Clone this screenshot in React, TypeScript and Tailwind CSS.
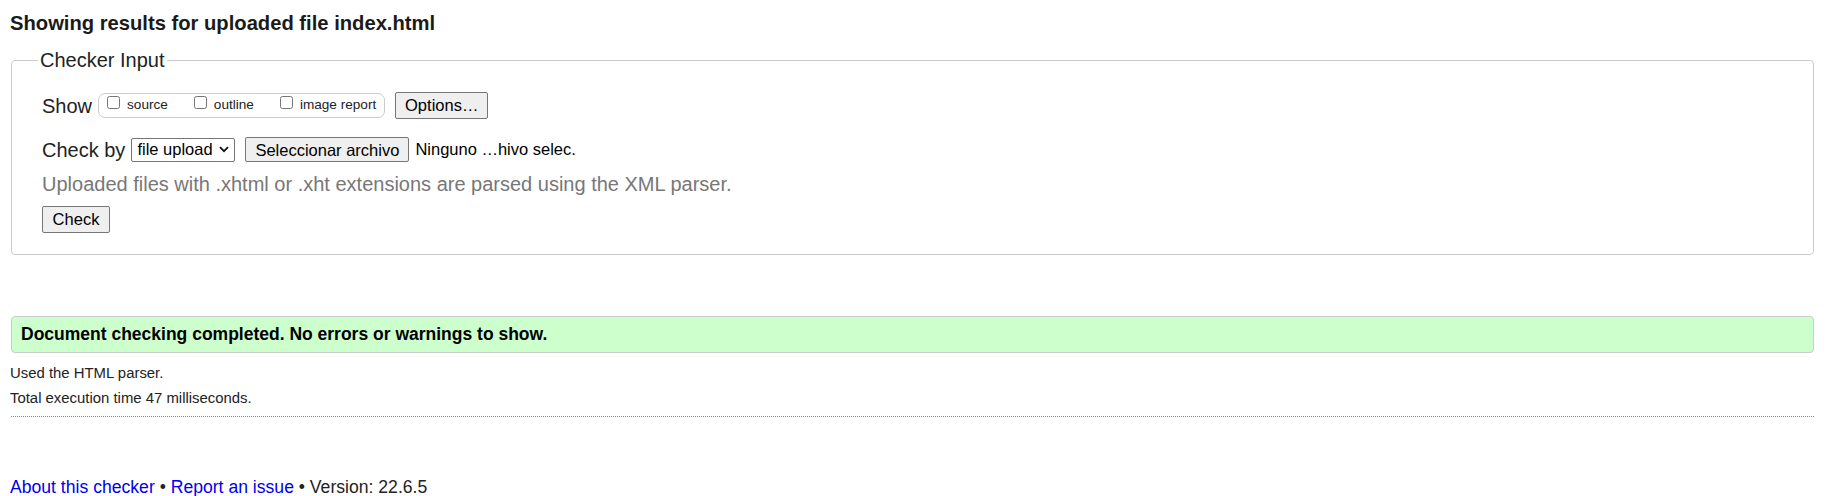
import React from "react";

function Chevron() {
  return (
    <svg width="10" height="7" viewBox="0 0 10 7" className="ml-[6px]">
      <path d="M1 1.2 L5 5.2 L9 1.2" fill="none" stroke="#111" strokeWidth="1.8" />
    </svg>
  );
}

function Box({ label }: { label: string }) {
  return (
    <label className="flex items-center">
      <input type="checkbox" className="w-[13px] h-[13px] -mt-[6px]" />
      <span className="ml-[7px] text-[13.6px]">{label}</span>
    </label>
  );
}

export default function App() {
  return (
    <div className="min-h-[496px] bg-white text-[#222] font-['Liberation_Sans',Arial,sans-serif] pl-[11px] pr-[24px]">
      {/* result heading */}
      <h2 className="pt-[11px] -ml-px text-[20.2px] leading-[24px] font-bold text-[#1a1a1a]">
        Showing results for uploaded file index.html
      </h2>

      <fieldset className="mt-[13px] border border-[#cccccc] rounded-[4px] pl-[30px] pr-[30px] pt-[20px] pb-[21px]">
        <legend className="-ml-[4px] px-[2px] text-[20px] leading-[24px]">Checker Input</legend>

        <div className="flex items-center h-[27px]">
          <span className="text-[20px]">Show</span>
          <div className="ml-[6px] flex items-center h-[25px] border border-[#cccccc] rounded-[7px] pl-[8px] pr-[8px] gap-[26px]">
            <Box label="source" />
            <Box label="outline" />
            <Box label="image report" />
          </div>
          <button className="ml-[10px] h-[27px] w-[93px] bg-[#efefef] border border-[#767676] rounded-[2px] text-[16.5px] text-black">
            Options…
          </button>
        </div>

        <div className="mt-[17px] flex items-center h-[27px]">
          <span className="text-[20px]">Check by</span>
          <div className="ml-[6px] flex items-center h-[24px] w-[104px] bg-white border border-[#767676] rounded-[2px] pl-[5px] text-[16.5px] text-black">
            file upload
            <Chevron />
          </div>
          <button className="ml-[10px] h-[25px] w-[164px] bg-[#efefef] border border-[#767676] rounded-[2px] text-[16.5px] text-black">
            Seleccionar archivo
          </button>
          <span className="ml-[6px] text-[16.5px] text-black">Ninguno …hivo selec.</span>
        </div>

        <p className="mt-[9px] text-[20px] leading-[24px] text-[#777777]">
          Uploaded files with .xhtml or .xht extensions are parsed using the XML parser.
        </p>

        <button className="mt-[10px] h-[27px] w-[68px] bg-[#efefef] border border-[#767676] rounded-[2px] text-[16.5px] text-black">
          Check
        </button>
      </fieldset>

      <div className="mt-[61px] h-[37px] flex items-center bg-[#ccffcc] border border-[#cccccc] rounded-[4px] pl-[9px]">
        <p className="text-[17.5px] font-bold text-black">
          Document checking completed. No errors or warnings to show.
        </p>
      </div>

      <p className="mt-[10px] -ml-px text-[14.9px] leading-[20px] text-[#222]">Used the HTML parser.</p>
      <p className="mt-[5px] -ml-px text-[14.9px] leading-[20px] text-[#222]">
        Total execution time 47 milliseconds.
      </p>
      <div className="mt-[8px] border-t border-dotted border-[#888888]" />

      <p className="mt-[60px] -ml-px text-[17.6px] leading-[20px] text-[#222]">
        <a href="#" className="text-[#0000ee]">About this checker</a>
        {" • "}
        <a href="#" className="text-[#0000ee]">Report an issue</a>
        {" • Version: 22.6.5"}
      </p>
    </div>
  );
}
